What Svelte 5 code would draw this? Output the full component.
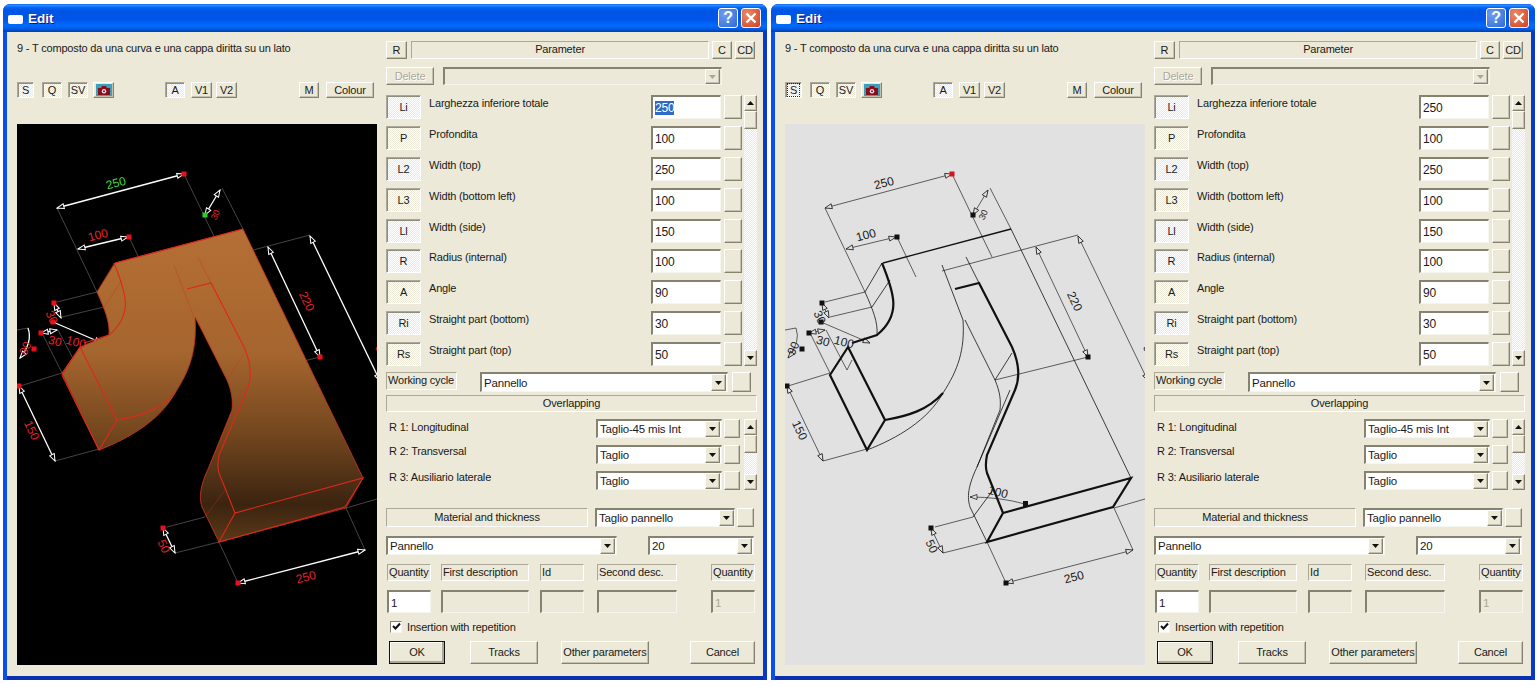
<script lang="ts">
  const params = [
    { code: 'Li', label: 'Larghezza inferiore totale', value: '250' },
    { code: 'P', label: 'Profondita', value: '100' },
    { code: 'L2', label: 'Width (top)', value: '250' },
    { code: 'L3', label: 'Width (bottom left)', value: '100' },
    { code: 'Ll', label: 'Width (side)', value: '150' },
    { code: 'R', label: 'Radius (internal)', value: '100' },
    { code: 'A', label: 'Angle', value: '90' },
    { code: 'Ri', label: 'Straight part (bottom)', value: '30' },
    { code: 'Rs', label: 'Straight part (top)', value: '50' },
  ];

  const overlaps = [
    { label: 'R 1: Longitudinal', value: 'Taglio-45 mis Int' },
    { label: 'R 2: Transversal', value: 'Taglio' },
    { label: 'R 3: Ausiliario laterale', value: 'Taglio' },
  ];

  const outline =
    'M115 263L243 229L363 478L346 508L219 542L202 507C200 500 198 490 209 467L232 410C233 400 232 392 227 380L195 317C197 350 190 370 175 393C160 420 130 438 99 450L62 373L80 347L109 335C110 322 105 310 97 292Z';

  // lines that the solid body covers in the shaded view
  const behind = [
    'M57 208L97 292', 'M184 174L224 257', 'M222 188L243 229', 'M129 237L148 277',
    'M174 271L310 235', 'M320 357L227 380', 'M57 302L97 292', 'M62 317L104 307',
    'M43 335L62 373', 'M58 330L79 370L84 360', 'M20 386L62 373', 'M55 461L99 449',
    'M167 527L205 517', 'M175 553L219 542', 'M219 542L238 583', 'M346 508L365 550',
    'M346 508L377 499', 'M17 330L28 328',
  ];

  const thick = [
    'M114 263C127 295 133 315 109 335L84 343',
    'M80 347L62 375L99 450L117 420Z',
    'M117 420C140 416 160 410 175 393',
    'M187 289L211 283L244 347C252 365 252 378 247 390L219 455C217 465 218 470 219 473L235 513L363 478L345 507L219 542L235 513',
  ];

  const fine = [
    'M114 263L97 292', 'M122 280L104 307', 'M97 292C105 310 110 322 109 335',
    'M99 450C130 438 160 420 175 393C190 370 197 350 195 320L174 265',
    'M198 257L211 283',
    'M197 320L227 380C232 392 233 400 232 410L209 467C198 490 200 500 202 507L219 542',
    'M242 390L209 467', 'M244 353L227 380', 'M225 490L205 517', 'M243 229L363 478',
  ];

  const dims = [
    [57, 208, 184, 174], [78, 249, 128, 237], [220, 190, 205, 215], [268, 247, 320, 357],
    [310, 236, 380, 381], [54, 303, 61, 318], [41, 333, 57, 330], [19, 386, 55, 461],
    [163, 528, 175, 553], [238, 583, 365, 550],
  ];

  const dots = [
    { x: 184, y: 174, accent: 'wire' }, { x: 129, y: 237 }, { x: 205, y: 215, accent: 'shaded' },
    { x: 320, y: 357 }, { x: 54, y: 303 }, { x: 53, y: 322 }, { x: 41, y: 333 }, { x: 34, y: 349 },
    { x: 19, y: 386 }, { x: 163, y: 528 }, { x: 238, y: 583 },
  ];

  const labels = [
    { text: '250', x: 117, y: 183, turn: -15, accent: true },
    { text: '100', x: 99, y: 235, turn: -15 },
    { text: '30', x: 218, y: 212, turn: -65, small: true },
    { text: '220', x: 303, y: 299, turn: 65 },
    { text: '520', x: 379, y: 352, turn: 65 },
    { text: '30', x: 48, y: 315, turn: 65 },
    { text: '30', x: 54, y: 341, turn: 15 },
    { text: '100', x: 75, y: 342, turn: 15 },
    { text: '90', x: 29, y: 346, turn: -65 },
    { text: '150', x: 28, y: 428, turn: 65 },
    { text: '50', x: 160, y: 544, turn: 65 },
    { text: '250', x: 307, y: 577, turn: -15 },
  ];
</script>

{#snippet arrowBtn(up: boolean)}
  <span class="btn scroll-arrow">
    <svg width="7" height="4" viewBox="0 0 7 4"><path d={up ? 'M3.5 0L7 4H0Z' : 'M0 0H7L3.5 4Z'} fill="#111" /></svg>
  </span>
{/snippet}

{#snippet combo(value: string, disabled = false)}
  <div class="field combo" class:off={disabled}>
    <span class="combo-text">{value}</span>
    <span class="btn combo-arrow">
      <svg width="7" height="4" viewBox="0 0 7 4"><path d="M0 0H7L3.5 4Z" fill={disabled ? '#aca899' : '#111'} /></svg>
    </span>
  </div>
{/snippet}

{#snippet drawing(scene: string)}
  <svg class="drawing {scene}" viewBox="17 124 360 541" width="360" height="541">
    <defs>
      <linearGradient id="body-{scene}" x1="0" y1="229" x2="0" y2="542" gradientUnits="userSpaceOnUse">
        <stop offset="0" stop-color="#b56f35" />
        <stop offset="0.4" stop-color="#a5652e" />
        <stop offset="0.65" stop-color="#74471f" />
        <stop offset="0.88" stop-color="#3b2410" />
        <stop offset="1" stop-color="#5c3917" />
      </linearGradient>
      <marker id="tip-{scene}" markerUnits="userSpaceOnUse" markerWidth="9" markerHeight="7" refX="8" refY="3.5" orient="auto-start-reverse">
        <path class="tip" d="M1 1L8 3.5L1 6Z" />
      </marker>
    </defs>

    {#each behind as d}
      <path class="ext" {d} />
    {/each}
    <line class="dim" x1="53" y1="322" x2="102" y2="343" marker-end="url(#tip-{scene})" />
    <path class="dim" d="M202 497Q232 497 257 504" marker-start="url(#tip-{scene})" />
    <rect class="dot" x="255" y="501" width="5" height="6" />
    <text class="note" transform="translate(229 496) rotate(15)" text-anchor="middle">100</text>

    <path class="body" d={outline} fill="url(#body-{scene})" />
    {#each fine as d}
      <path class="fine" {d} />
    {/each}
    <path class="edge" d="M115 263L243 229" />
    {#each thick as d}
      <path class="thick" {d} />
    {/each}

    {#each dims as [x1, y1, x2, y2]}
      <line class="dim" {x1} {y1} {x2} {y2} marker-start="url(#tip-{scene})" marker-end="url(#tip-{scene})" />
    {/each}
    <path class="dim" d="M28 328Q33 342 20 358" marker-end="url(#tip-{scene})" />

    {#each dots as dot}
      <rect class="dot" class:hot={dot.accent === scene} x={dot.x - 2.5} y={dot.y - 2.5} width="5" height="5" />
    {/each}
    {#each labels as l}
      <text class="note" class:lead={l.accent} class:small={l.small} text-anchor="middle" transform="translate({l.x} {l.y + 4}) rotate({l.turn})">{l.text}</text>
    {/each}
  </svg>
{/snippet}

{#snippet dialog(scene: string, selected: boolean)}
  <section class="window">
    <header class="titlebar">
      <span class="app-icon"></span>
      <strong>Edit</strong>
      <span class="caption-btn help">?</span>
      <span class="caption-btn close">
        <svg width="12" height="12" viewBox="0 0 12 12"><path d="M1.5 1.5L10.5 10.5M10.5 1.5L1.5 10.5" fill="none" stroke="#fff" stroke-width="2.4" /></svg>
      </span>
    </header>

    <div class="client">
      <div class="viewer">
        <p class="subject">9 - T composto da una curva e una cappa diritta su un lato</p>
        <div class="toolbar">
          <span class="btn on tool-s" class:focus={!selected}><i>S</i></span>
          <span class="btn on tool-q">Q</span>
          <span class="btn on tool-sv">SV</span>
          <span class="btn tool-cam">
            <svg width="16" height="12" viewBox="0 0 16 12">
              <rect width="16" height="12" fill="#3c9fb8" />
              <path d="M2 4H5L6 2H10L11 4H14V11H2Z" fill="#8a0f1e" />
              <circle cx="8" cy="7.2" r="2.2" fill="#f3e4e4" />
              <circle cx="8" cy="7.2" r="1" fill="#8a0f1e" />
            </svg>
          </span>
          <span class="btn on tool-a">A</span>
          <span class="btn tool-v">V1</span>
          <span class="btn tool-v2">V2</span>
          <span class="btn tool-m">M</span>
          <span class="btn tool-colour">Colour</span>
        </div>
        <div class="canvas {scene}">
          {@render drawing(scene)}
        </div>
      </div>

      <div class="form">
        <div class="head-row">
          <span class="btn">R</span>
          <span class="etched">Parameter</span>
          <span class="btn">C</span>
          <span class="btn">CD</span>
        </div>

        <div class="delete-row">
          <span class="btn off">Delete</span>
          {@render combo('', true)}
        </div>

        <div class="params">
          <div class="param-rows">
            {#each params as p, i}
              <div class="param-row">
                <span class="btn on code">{p.code}</span>
                <span class="param-label">{p.label}</span>
                <div class="field">
                  {#if selected && i === 0}<mark>{p.value}</mark>{:else}{p.value}{/if}
                </div>
                <span class="btn"></span>
              </div>
            {/each}
          </div>
          <div class="scrollbar">
            {@render arrowBtn(true)}
            <span class="btn thumb"></span>
            <span class="track"></span>
            {@render arrowBtn(false)}
          </div>
        </div>

        <div class="cycle-row">
          <span class="etched left">Working cycle</span>
          {@render combo('Pannello')}
          <span class="btn"></span>
        </div>
        <div class="etched overlap">Overlapping</div>

        <div class="params overlaps">
          <div class="overlap-rows">
            {#each overlaps as o}
              <div class="overlap-row">
                <span class="overlap-label">{o.label}</span>
                {@render combo(o.value)}
                <span class="btn"></span>
              </div>
            {/each}
          </div>
          <div class="scrollbar">
            {@render arrowBtn(true)}
            <span class="btn thumb"></span>
            <span class="track"></span>
            {@render arrowBtn(false)}
          </div>
        </div>

        <div class="material-row">
          <span class="etched">Material and thickness</span>
          {@render combo('Taglio pannello')}
          <span class="btn"></span>
        </div>
        <div class="panel-row">
          {@render combo('Pannello')}
          {@render combo('20')}
        </div>

        <div class="desc-grid">
          <span class="etched left">Quantity</span>
          <span class="etched left">First description</span>
          <span class="etched left">Id</span>
          <span class="etched left">Second desc.</span>
          <span class="etched left">Quantity</span>
          <div class="field">1</div>
          <div class="field off"></div>
          <div class="field off"></div>
          <div class="field off"></div>
          <div class="field off ghost">1</div>
        </div>

        <label class="repeat">
          <span class="check">
            <svg width="9" height="9" viewBox="0 0 9 9"><path d="M1 4L3.5 6.5L8 1.5" fill="none" stroke="#111" stroke-width="2" /></svg>
          </span>
          Insertion with repetition
        </label>

        <div class="actions">
          <span class="btn default">OK</span>
          <span class="btn tracks">Tracks</span>
          <span class="btn other">Other parameters</span>
          <span class="btn cancel">Cancel</span>
        </div>
      </div>
    </div>
  </section>
{/snippet}

<div class="desktop">
  {@render dialog('shaded', true)}
  {@render dialog('wire', false)}
</div>

<style>
  :global(body) {
    margin: 0;
    background: #fff;
  }

  .desktop {
    display: flex;
    gap: 4px;
    width: 1540px;
    height: 686px;
    box-sizing: border-box;
    padding: 4px 0 0 3px;
    background: #fff;
    font-family: 'Liberation Sans', Arial, sans-serif;
    font-size: 11px;
    letter-spacing: -0.18px;
    color: #1a1a1a;
    overflow: hidden;
  }

  .window {
    width: 764px;
    height: 676px;
    display: flex;
    flex-direction: column;
    flex: none;
    border-radius: 7px 7px 0 0;
    overflow: hidden;
    background: linear-gradient(90deg, #0a50e6 50%, #0838c8 50%);
  }

  .titlebar {
    display: flex;
    align-items: center;
    height: 28px;
    flex: none;
    padding: 0 6px 0 5px;
    background: linear-gradient(#0058ee, #3593ff 4%, #127dff 8%, #0262ee 14%, #0054e3 24%, #0055eb 56%, #026afe 76%, #0062ef 86%, #0052d6 92%, #0040ab 100%);
    color: #fff;
  }

  .titlebar strong {
    font-size: 13.5px;
    letter-spacing: 0;
    margin-left: 5px;
    text-shadow: 1px 1px 0 #0f1089;
  }

  .app-icon {
    width: 15px;
    height: 9px;
    border-radius: 2px;
    margin-top: 2px;
    background: #fff;
  }

  .caption-btn {
    width: 20px;
    height: 20px;
    box-sizing: border-box;
    border: 1px solid #fff;
    border-radius: 3px;
    display: flex;
    align-items: center;
    justify-content: center;
    font-size: 16px;
    font-weight: 700;
  }

  .help {
    margin-left: auto;
    margin-right: 3px;
    background: radial-gradient(circle at 30% 30%, #6f9ef0, #2f68d8);
  }

  .close {
    background: radial-gradient(circle at 30% 30%, #ea8a6a, #d2401f);
  }

  .client {
    display: flex;
    height: 644px;
    margin: 0 4px;
    background: #ece9d8;
    box-shadow: 0 4px 0 #0a30b0;
  }

  .viewer {
    width: 379px;
    flex: none;
    padding-left: 10px;
    box-sizing: border-box;
  }

  .subject {
    margin: 0;
    padding-top: 10px;
    height: 50px;
    box-sizing: border-box;
  }

  .toolbar {
    display: flex;
    height: 16px;
    margin-bottom: 26px;
  }

  .toolbar .btn {
    height: 16px;
    padding-bottom: 1px;
  }

  .tool-s { width: 17px; }
  .tool-q { width: 20px; margin-left: 8px; }
  .tool-sv { width: 20px; margin-left: 6px; }
  .tool-cam { width: 21px; margin-left: 5px; }
  .tool-a { width: 20px; margin-left: 51px; }
  .tool-v { width: 21px; margin-left: 6px; }
  .tool-v2 { width: 21px; margin-left: 4px; }
  .tool-m { width: 20px; margin-left: 62px; }
  .tool-colour { width: 48px; margin-left: 7px; }

  .focus i {
    outline: 1px dotted #222;
    outline-offset: 0;
    padding: 0 2px;
  }

  .toolbar i {
    font-style: normal;
  }

  .canvas {
    width: 360px;
    height: 541px;
    overflow: hidden;
  }

  .canvas.shaded { background: #000; }
  .canvas.wire { background: #e1e1e1; }

  .drawing {
    display: block;
  }

  .note {
    font-size: 12px;
    letter-spacing: 0;
  }

  .note.small {
    font-size: 9px;
  }

  .ext, .fine, .edge, .thick, .dim {
    fill: none;
  }

  .shaded .ext { stroke: #555; stroke-width: 0.8; }
  .shaded .fine { stroke: #c8321a; stroke-width: 0.7; opacity: 0.55; }
  .shaded .edge, .shaded .thick { stroke: #e0281a; stroke-width: 1.1; }
  .shaded .dim { stroke: #fff; stroke-width: 1.3; }
  .shaded .tip { fill: #000; stroke: #fff; stroke-width: 1; }
  .shaded .dot { fill: #e8101c; }
  .shaded .dot.hot { fill: #28d02a; }
  .shaded .note { fill: #e8202a; }
  .shaded .note.lead { fill: #3ed83e; }
  .shaded .body { stroke: #c8381c; stroke-width: 0.7; }

  .wire .ext { stroke: #222; stroke-width: 0.7; }
  .wire .fine { stroke: #111; stroke-width: 0.8; }
  .wire .edge { stroke: #111; stroke-width: 1.3; }
  .wire .thick { stroke: #111; stroke-width: 2.2; }
  .wire .dim { stroke: #222; stroke-width: 0.7; }
  .wire .tip { fill: #e1e1e1; stroke: #222; stroke-width: 0.8; }
  .wire .dot { fill: #111; }
  .wire .dot.hot { fill: #d81020; }
  .wire .note { fill: #222; }
  .wire .body { fill: none; }

  .form {
    width: 371px;
    flex: none;
    padding-top: 9px;
    box-sizing: border-box;
    margin-left: 0;
  }

  .btn {
    display: flex;
    align-items: center;
    justify-content: center;
    box-sizing: border-box;
    background: #ece9d8;
    border-style: solid;
    border-width: 1px;
    border-color: #fff #85836f #85836f #fff;
    box-shadow: inset -1px -1px 0 #c4c1b0;
    white-space: nowrap;
  }

  .btn.on {
    border-color: #aca899 #fff #fff #aca899;
    box-shadow: inset 1px 1px 0 #8f8d7e;
    background: repeating-conic-gradient(#fff 0 25%, #ece9d8 0 50%) 0 0 / 2px 2px;
  }

  .btn.off {
    color: #aca899;
    text-shadow: 1px 1px 0 #fff;
  }

  .btn.default {
    outline: 1px solid #111;
    outline-offset: -1px;
    box-shadow: inset -2px -2px 0 #aca899, inset 1px 1px 0 #fff;
  }

  .etched {
    display: flex;
    align-items: center;
    justify-content: center;
    box-sizing: border-box;
    padding-bottom: 2px;
    border: 1px solid;
    border-color: #aca899 #fff #fff #aca899;
    white-space: nowrap;
  }

  .etched.left {
    justify-content: flex-start;
    padding-left: 1px;
  }

  .field {
    display: flex;
    align-items: center;
    box-sizing: border-box;
    padding: 1px 2px 0;
    background: #fff;
    border-style: solid;
    border-width: 2px 1px 1px 2px;
    border-color: #85836f #f6f5ee #f6f5ee #85836f;
    overflow: hidden;
    font-size: 11.5px;
  }

  .field.off {
    background: #ece9d8;
  }

  .ghost {
    color: #aca899;
  }

  mark {
    background: #316ac5;
    color: #fff;
  }

  .combo {
    padding-right: 1px;
    padding-top: 0;
    padding-bottom: 0;
  }

  .combo-text {
    flex: 1;
    min-width: 0;
  }

  .combo-arrow {
    width: 15px;
    height: 100%;
    flex: none;
  }

  .head-row {
    display: grid;
    grid-template-columns: 21px 299px 20px 20px;
    gap: 3px;
    height: 18px;
  }

  .head-row .etched {
    margin-left: 1px;
  }

  .delete-row {
    display: grid;
    grid-template-columns: 48px 279px;
    gap: 9px;
    height: 18px;
    margin-top: 8px;
  }

  .params {
    display: flex;
    gap: 2px;
    margin-top: 10px;
  }

  .param-rows {
    width: 356px;
    display: grid;
    grid-auto-rows: 24px;
    row-gap: 6.9px;
  }

  .param-row {
    display: grid;
    grid-template-columns: 35px 1fr 70px 18px;
    column-gap: 3px;
  }

  .param-label {
    padding: 2px 0 0 5px;
  }

  .param-row .field {
    font-size: 12px;
  }

  .scrollbar {
    width: 13px;
    display: flex;
    flex-direction: column;
    flex: none;
  }

  .scroll-arrow {
    height: 16px;
    flex: none;
  }

  .thumb {
    height: 18px;
    flex: none;
  }

  .track {
    flex: 1;
    background: repeating-conic-gradient(#fff 0 25%, #ece9d8 0 50%) 0 0 / 2px 2px;
  }

  .cycle-row {
    display: grid;
    grid-template-columns: 71px 275px 19px;
    height: 20px;
    margin-top: 6px;
  }

  .cycle-row .etched {
    height: 18px;
  }

  .cycle-row .combo {
    margin-left: 23px;
    margin-right: 4px;
  }

  .overlap {
    width: 371px;
    height: 17px;
    margin-top: 3px;
  }

  .overlaps {
    margin-top: 7px;
  }

  .overlap-rows {
    width: 356px;
    display: grid;
    grid-auto-rows: 19px;
    row-gap: 7px;
  }

  .overlap-row {
    display: grid;
    grid-template-columns: 1fr 126px 16px;
    column-gap: 2px;
    padding-right: 2px;
  }

  .overlap-label {
    padding: 2px 0 0 3px;
  }

  .overlap-row:not(:first-child) .overlap-label {
    padding-top: 0;
  }

  .material-row {
    display: grid;
    grid-template-columns: 202px 140px 17px;
    column-gap: 4px;
    height: 19px;
    margin-top: 18px;
  }

  .material-row .combo {
    margin-left: 3px;
    margin-right: -3px;
  }

  .material-row .btn {
    margin-left: 1px;
    margin-right: -1px;
  }

  .panel-row {
    display: flex;
    justify-content: space-between;
    width: 368px;
    height: 19px;
    margin-top: 9px;
  }

  .panel-row .combo:first-child {
    width: 231px;
  }

  .panel-row .combo:last-child {
    width: 106px;
  }

  .desc-grid {
    display: grid;
    grid-template-columns: 44px 98px 55px 93px 78px;
    grid-template-rows: 17px 23px;
    row-gap: 9px;
    margin-top: 9px;
    margin-left: 1px;
  }

  .desc-grid > :nth-child(5n + 2) { margin-left: 10px; }
  .desc-grid > :nth-child(5n + 3) { margin-left: 11px; }
  .desc-grid > :nth-child(5n + 4) { margin-left: 13px; }
  .desc-grid > :nth-child(5n) { margin-left: 34px; }

  .repeat {
    display: flex;
    align-items: center;
    gap: 5px;
    height: 13px;
    margin: 7px 0 0 4px;
  }

  .check {
    width: 12px;
    height: 12px;
    box-sizing: border-box;
    display: flex;
    align-items: center;
    justify-content: center;
    background: #fff;
    border-style: solid;
    border-width: 1px;
    border-color: #85836f #f6f5ee #f6f5ee #85836f;
  }

  .actions {
    display: flex;
    height: 23px;
    margin: 8px 0 0 3px;
  }

  .actions .btn {
    padding-bottom: 2px;
  }

  .default { width: 56px; }
  .tracks { width: 68px; margin-left: 25px; }
  .other { width: 88px; margin-left: 23px; }
  .cancel { width: 65px; margin-left: 41px; }
</style>
